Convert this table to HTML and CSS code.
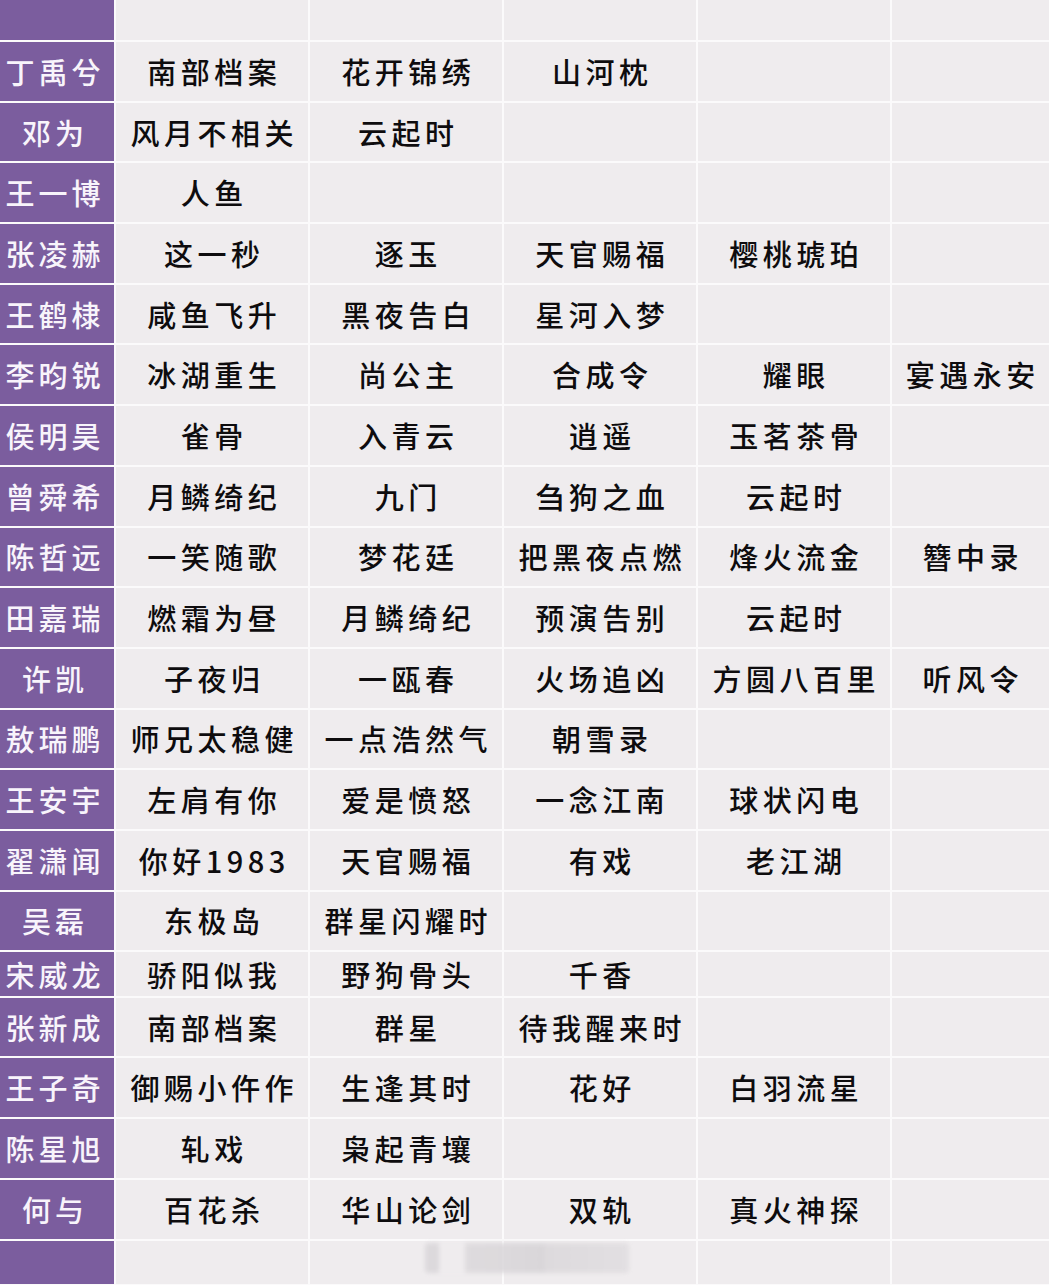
FILE: index.html
```html
<!DOCTYPE html>
<html lang="zh-CN">
<head>
<meta charset="utf-8">
<title>片单</title>
<link rel="stylesheet" href="styles.css">
</head>
<body>
<div class="sheet">
  <div class="name head"></div><div class="cell head"></div><div class="cell head"></div><div class="cell head"></div><div class="cell head"></div><div class="cell head"></div>

  <div class="name">丁禹兮</div><div class="cell">南部档案</div><div class="cell">花开锦绣</div><div class="cell">山河枕</div><div class="cell"></div><div class="cell"></div>
  <div class="name">邓为</div><div class="cell">风月不相关</div><div class="cell">云起时</div><div class="cell"></div><div class="cell"></div><div class="cell"></div>
  <div class="name">王一博</div><div class="cell">人鱼</div><div class="cell"></div><div class="cell"></div><div class="cell"></div><div class="cell"></div>
  <div class="name">张凌赫</div><div class="cell">这一秒</div><div class="cell">逐玉</div><div class="cell">天官赐福</div><div class="cell">樱桃琥珀</div><div class="cell"></div>
  <div class="name">王鹤棣</div><div class="cell">咸鱼飞升</div><div class="cell">黑夜告白</div><div class="cell">星河入梦</div><div class="cell"></div><div class="cell"></div>
  <div class="name">李昀锐</div><div class="cell">冰湖重生</div><div class="cell">尚公主</div><div class="cell">合成令</div><div class="cell">耀眼</div><div class="cell">宴遇永安</div>
  <div class="name">侯明昊</div><div class="cell">雀骨</div><div class="cell">入青云</div><div class="cell">逍遥</div><div class="cell">玉茗茶骨</div><div class="cell"></div>
  <div class="name">曾舜希</div><div class="cell">月鳞绮纪</div><div class="cell">九门</div><div class="cell">刍狗之血</div><div class="cell">云起时</div><div class="cell"></div>
  <div class="name">陈哲远</div><div class="cell">一笑随歌</div><div class="cell">梦花廷</div><div class="cell">把黑夜点燃</div><div class="cell">烽火流金</div><div class="cell">簪中录</div>
  <div class="name">田嘉瑞</div><div class="cell">燃霜为昼</div><div class="cell">月鳞绮纪</div><div class="cell">预演告别</div><div class="cell">云起时</div><div class="cell"></div>
  <div class="name">许凯</div><div class="cell">子夜归</div><div class="cell">一瓯春</div><div class="cell">火场追凶</div><div class="cell">方圆八百里</div><div class="cell">听风令</div>
  <div class="name">敖瑞鹏</div><div class="cell">师兄太稳健</div><div class="cell">一点浩然气</div><div class="cell">朝雪录</div><div class="cell"></div><div class="cell"></div>
  <div class="name">王安宇</div><div class="cell">左肩有你</div><div class="cell">爱是愤怒</div><div class="cell">一念江南</div><div class="cell">球状闪电</div><div class="cell"></div>
  <div class="name">翟潇闻</div><div class="cell">你好1983</div><div class="cell">天官赐福</div><div class="cell">有戏</div><div class="cell">老江湖</div><div class="cell"></div>
  <div class="name">吴磊</div><div class="cell">东极岛</div><div class="cell">群星闪耀时</div><div class="cell"></div><div class="cell"></div><div class="cell"></div>
  <div class="name">宋威龙</div><div class="cell">骄阳似我</div><div class="cell">野狗骨头</div><div class="cell">千香</div><div class="cell"></div><div class="cell"></div>
  <div class="name">张新成</div><div class="cell">南部档案</div><div class="cell">群星</div><div class="cell">待我醒来时</div><div class="cell"></div><div class="cell"></div>
  <div class="name">王子奇</div><div class="cell">御赐小仵作</div><div class="cell">生逢其时</div><div class="cell">花好</div><div class="cell">白羽流星</div><div class="cell"></div>
  <div class="name">陈星旭</div><div class="cell">轧戏</div><div class="cell">枭起青壤</div><div class="cell"></div><div class="cell"></div><div class="cell"></div>
  <div class="name">何与</div><div class="cell">百花杀</div><div class="cell">华山论剑</div><div class="cell">双轨</div><div class="cell">真火神探</div><div class="cell"></div>

  <div class="name foot"></div><div class="cell foot"></div><div class="cell foot"></div><div class="cell foot"></div><div class="cell foot"></div><div class="cell foot"></div>

  <div class="watermark"></div>
</div>
</body>
</html>
```

FILE: styles.css
```css
html, body {
  margin: 0;
  padding: 0;
  background: #ffffff;
}

.sheet {
  position: relative;
  width: 1049px;
  height: 1285px;
  overflow: hidden;
  display: grid;
  grid-template-columns: 114px 192px 192px 192px 192px 157px;
  grid-template-rows:
    40px
    58.7px 58.7px 58.7px 58.7px 58.7px
    58.7px 58.7px 58.7px 58.7px 58.7px
    58.7px 58.7px 58.7px 58.7px 58.7px
    44px 58px 59px 59px 59px
    43px;
  gap: 2px;
  background: #fbfafb;
  font-family: "Noto Sans CJK SC", "Noto Sans", sans-serif;
  font-size: 29px;
  font-weight: 500;
  letter-spacing: 4.5px;
  line-height: 1;
}

.name,
.cell {
  display: flex;
  align-items: center;
  justify-content: center;
  white-space: nowrap;
}

.name {
  background: #7b5d9e;
  color: #f8f4fb;
  letter-spacing: 4px;
  padding-right: 4px;
}

.cell {
  background: #efecee;
  color: #0e0c0e;
  padding-left: 4.5px;
}

.watermark {
  position: absolute;
  left: 425px;
  top: 1243px;
  width: 204px;
  height: 30px;
  border-radius: 4px;
  background:
    linear-gradient(90deg,
      #d9d6d9 0px, #d9d6d9 14px,
      #efecee 14px, #efecee 40px,
      #dcd9dc 40px, #d6d3d6 120px,
      #dbd8db 120px, #e0dde0 204px);
  filter: blur(2px);
  opacity: 0.85;
}
```
